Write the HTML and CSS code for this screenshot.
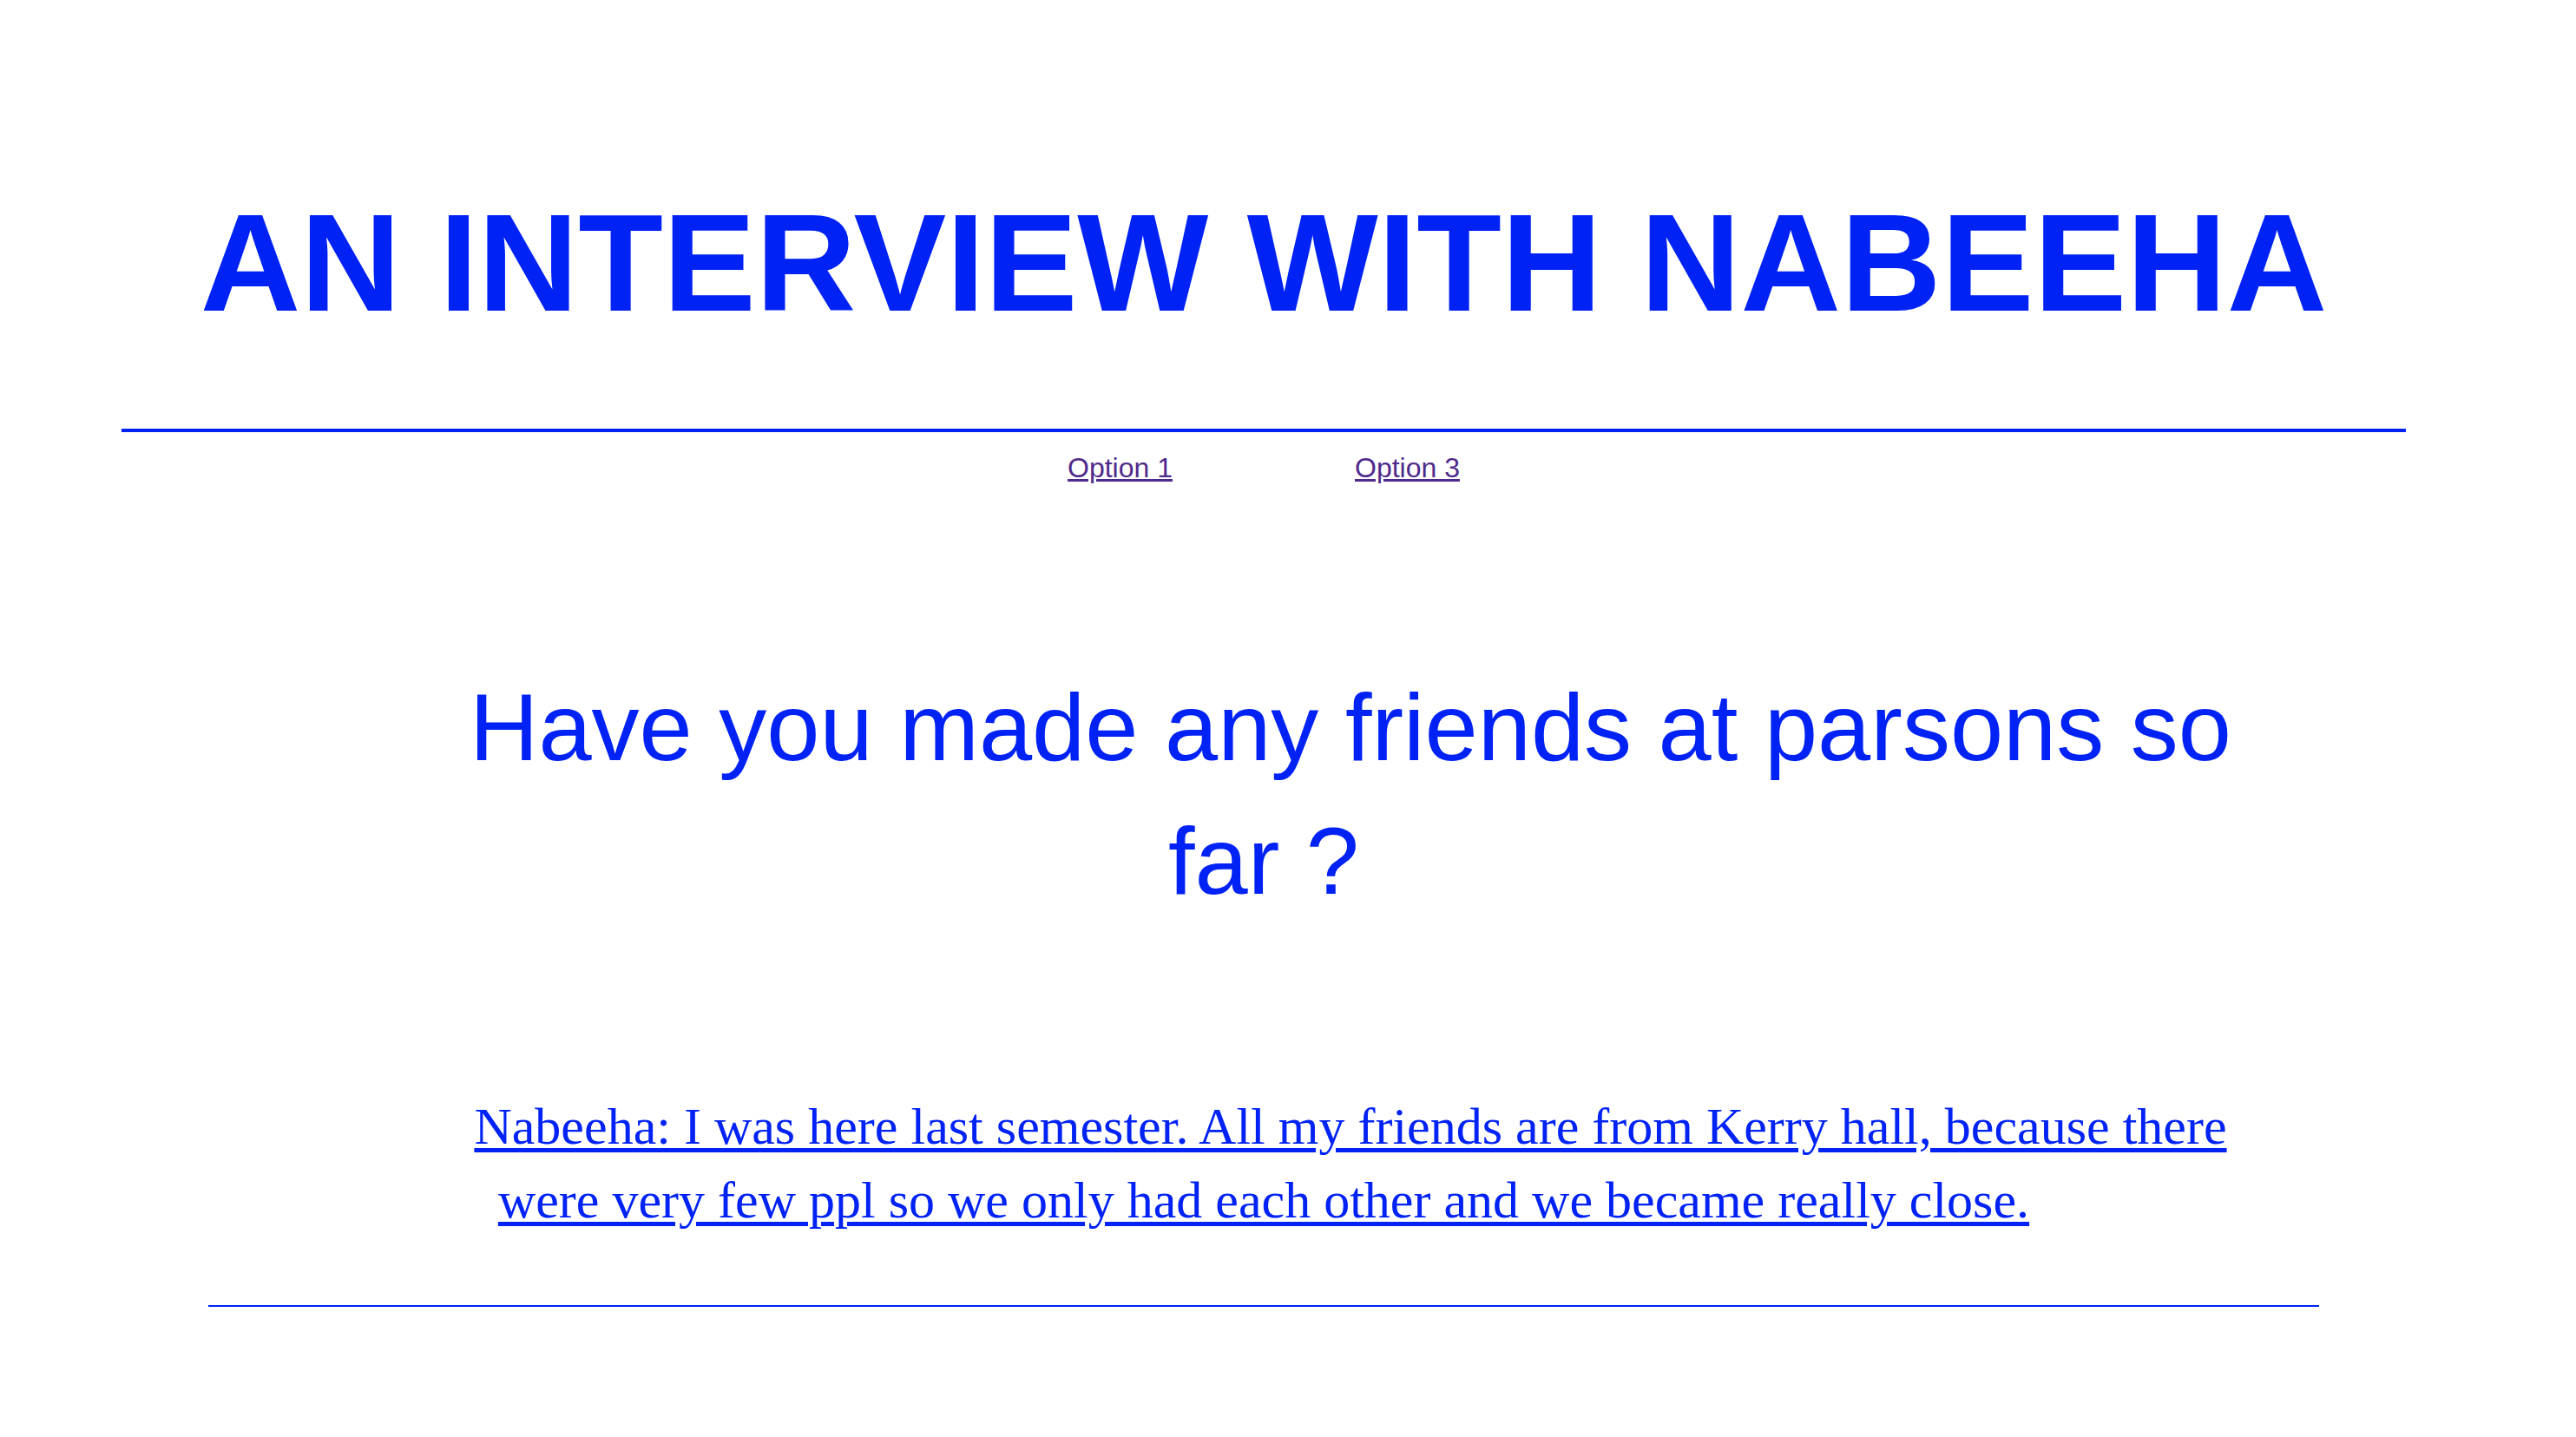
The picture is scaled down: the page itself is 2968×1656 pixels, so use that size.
FILE: index.html
```html
<!DOCTYPE html>
<html lang="en">
<head>
<meta charset="utf-8">
<title>An Interview with Nabeeha</title>
<link rel="stylesheet" href="styles.css">
</head>
<body>
<div class="page">
  <header class="masthead">
    <h1 class="title">AN INTERVIEW WITH NABEEHA</h1>
  </header>
  <div class="rule rule-top"></div>
  <nav class="nav">
    <a class="nav-link" href="#">Option 1</a>
    <a class="nav-link" href="#">Option 3</a>
  </nav>
  <main class="interview">
    <h2 class="question">Have you made any friends at parsons so far ?</h2>
    <p class="answer"><a class="answer-link" href="#">Nabeeha: I was here last semester. All my friends are from Kerry hall, because there were very few ppl so we only had each other and we became really close.</a></p>
  </main>
  <div class="rule rule-bottom"></div>
</div>
</body>
</html>
```
FILE: styles.css
```css
html, body {
  margin: 0;
  padding: 0;
  background: #ffffff;
}

body {
  font-family: "Liberation Sans", Arial, sans-serif;
  color: #0022f5;
}

.page {
  width: 2632px;
  margin-left: 140px;
  padding-top: 223px;
}

.title {
  margin: 0;
  font-family: "Liberation Sans", Arial, sans-serif;
  font-weight: bold;
  font-size: 160px;
  line-height: 160px;
  text-align: center;
  color: #0022f5;
}

.rule {
  background: #0022f5;
}

.rule-top {
  height: 4px;
  margin-top: 111px;
}

.nav {
  display: flex;
  justify-content: center;
  gap: 210px;
  margin-top: 25px;
  font-size: 32px;
  line-height: 32px;
}

.nav-link {
  color: #4f2a8c;
  text-decoration: underline;
}

.interview {
  display: flex;
  flex-direction: column;
  align-items: center;
}

.question {
  width: 2290px;
  margin: 206px 0 0;
  font-family: "Liberation Sans", Arial, sans-serif;
  font-weight: normal;
  font-size: 110px;
  line-height: 154px;
  text-align: center;
  text-indent: 200px;
  color: #0022f5;
}

.answer {
  width: 2290px;
  margin: 187px 0 0;
  font-family: "Liberation Serif", "Times New Roman", serif;
  font-size: 60px;
  line-height: 85px;
  text-align: center;
  text-indent: 200px;
}

.answer-link {
  color: #0022f5;
  text-decoration: underline;
  text-decoration-thickness: 5px;
  text-underline-offset: 5px;
}

.rule-bottom {
  height: 2px;
  margin: 78px 100px 0;
}
```
